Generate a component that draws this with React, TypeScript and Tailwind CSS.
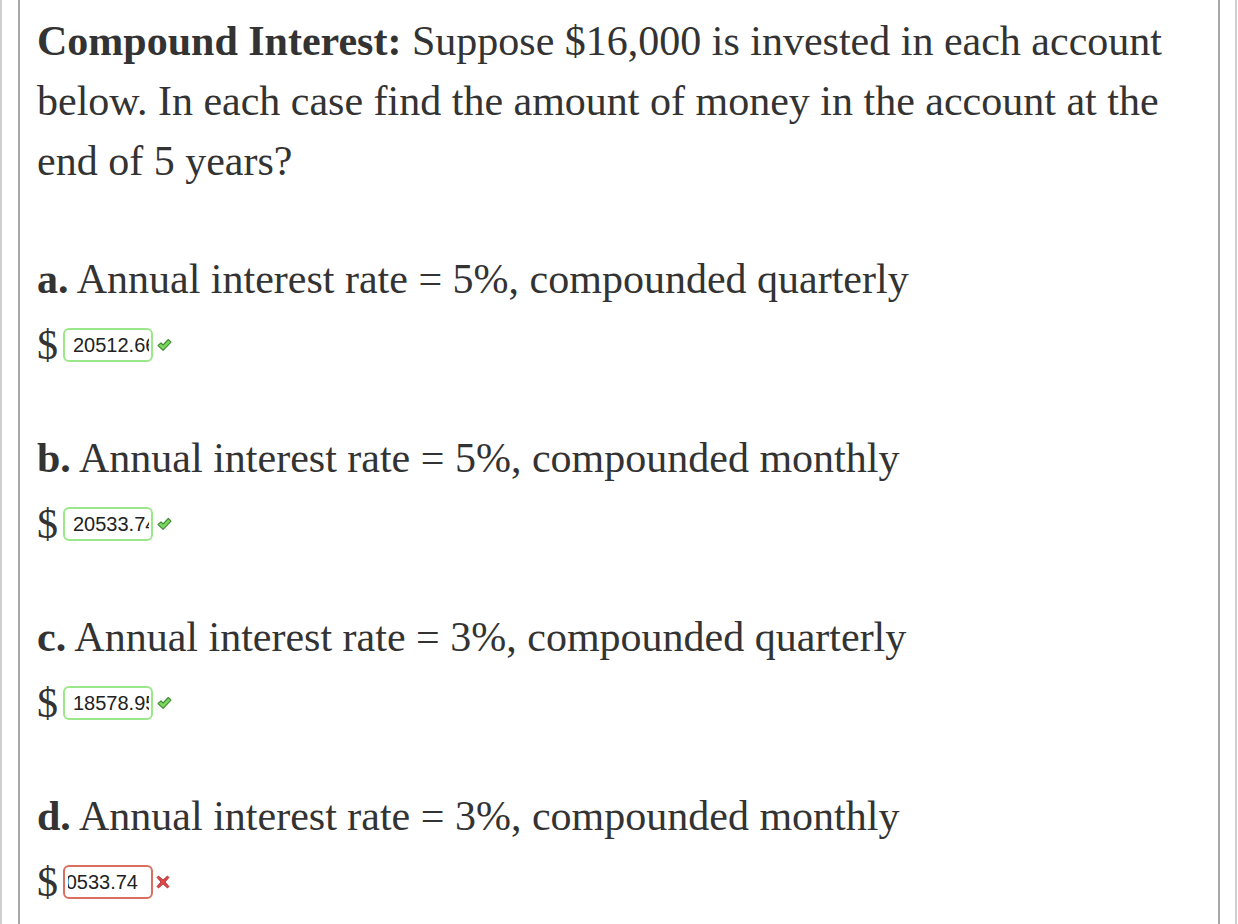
import React from 'react';

type Part = { label: string; rate: string; freq: string; value: string; ok: boolean };

const parts: Part[] = [
    { label: 'a.', rate: '5%', freq: 'quarterly', value: '20512.66', ok: true },
    { label: 'b.', rate: '5%', freq: 'monthly', value: '20533.74', ok: true },
    { label: 'c.', rate: '3%', freq: 'quarterly', value: '18578.95', ok: true },
    { label: 'd.', rate: '3%', freq: 'monthly', value: '20533.74', ok: false },
];

function CheckMark() {
    return (
        <svg width="17" height="14" viewBox="0 0 16 14" className="shrink-0">
            <path d="M1.5 7.5 L4.5 4.8 L6.6 7 L11.8 1.5 L14.5 4.2 L6.6 12.3 Z" fill="#7bd85f" stroke="#3f8a32" strokeWidth="1.1" strokeLinejoin="round" />
        </svg>
    );
}

function CrossMark() {
    return (
        <svg width="14" height="14" viewBox="0 0 14 14" className="shrink-0">
            <path d="M2.5 1 L7 5 L11.5 1 L13 2.5 L9 7 L13 11.5 L11.5 13 L7 9 L2.5 13 L1 11.5 L5 7 L1 2.5 Z" fill="#e04848" stroke="#a32a2a" strokeWidth="0.8" strokeLinejoin="round" />
        </svg>
    );
}

function AnswerBox({ value, ok }: { value: string; ok: boolean }) {
    return (
        <div className="flex items-center gap-[3px]">
            <span className="text-[42px] leading-none text-[#333] font-['Liberation_Serif',serif]">$</span>
            <div
                className={`ml-[2px] flex h-[34px] w-[90px] items-center rounded-[6px] border-2 bg-white text-[20px] text-[#222] font-['Liberation_Sans',Arial,sans-serif] ${
                    ok ? 'border-[#9be88a] pl-[8px] pr-[2px]' : 'border-[#d9705f] pl-[3px] pr-[13px]'
                }`}
            >
                <div className={`flex min-w-0 flex-1 overflow-hidden ${ok ? 'justify-start' : 'justify-end'}`}>
                    <span className="whitespace-nowrap">{value}</span>
                </div>
            </div>
            {ok ? <CheckMark /> : <CrossMark />}
        </div>
    );
}

export default function App() {
    return (
        <div className="flex h-[924px] w-full overflow-hidden bg-white">
            <div className="w-[2px] bg-[#cfcfcf]" />
            <div className="w-[16px]" />
            <div className="w-[1202px] border-x-2 border-[#a8a8a8] px-[17px] pt-[11px] text-[#333] font-['Liberation_Serif','Times_New_Roman',serif]">
                <p className="text-[42px] leading-[60px]">
                    <b>Compound Interest:</b> Suppose $16,000 is invested in each account below. In each case find the amount of money in the account at the end of 5 years?
                </p>
                <div className="mt-[64px] flex flex-col gap-[68px]">
                    {parts.map((p) => (
                        <div key={p.label} className="flex flex-col gap-[21px]">
                            <p className="text-[42px] leading-[48px]">
                                <b>{p.label}</b> Annual interest rate = {p.rate}, compounded {p.freq}
                            </p>
                            <AnswerBox value={p.value} ok={p.ok} />
                        </div>
                    ))}
                </div>
            </div>
            <div className="w-[15px]" />
            <div className="w-[2px] bg-[#cfcfcf]" />
        </div>
    );
}
